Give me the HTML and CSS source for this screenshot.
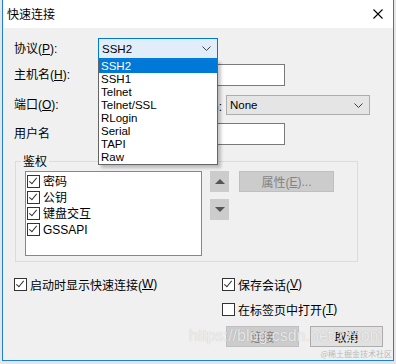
FILE: index.html
```html
<!DOCTYPE html>
<html lang="zh-CN">
<head>
  <meta charset="UTF-8" />
  <title>快速连接</title>
  <link rel="stylesheet" href="styles.css">
</head>
<body>

  <div class="window">
    <div class="titlebar">
      <span class="title">快速连接</span>
      <svg class="close" width="10" height="10" viewBox="0 0 10 10">
        <path d="M0.5 0.5 L9.5 9.5 M9.5 0.5 L0.5 9.5" stroke="#000" stroke-width="1.1" fill="none"/>
      </svg>
    </div>

    <div class="dialog">

      <!-- Connection fields -->
      <div class="form">
        <div class="row row-proto">
          <label class="lbl">协议(<u>P</u>):</label>
          <div class="combo combo-active proto-combo">
            <span>SSH2</span>
            <svg class="chev" width="9" height="5" viewBox="0 0 9 5"><path d="M0.5 0.5 L4.5 4.5 L8.5 0.5" stroke="#404040" fill="none"/></svg>
          </div>
        </div>
        <div class="row row-host">
          <label class="lbl">主机名(<u>H</u>):</label>
          <div class="textbox wide"></div>
        </div>
        <div class="row row-port">
          <label class="lbl">端口(<u>O</u>):</label>
          <div class="textbox port"></div>
          <label class="lbl-fw">防火墙(<u>F</u>):</label>
          <div class="combo fw-combo">
            <span>None</span>
            <svg class="chev" width="9" height="5" viewBox="0 0 9 5"><path d="M0.5 0.5 L4.5 4.5 L8.5 0.5" stroke="#404040" fill="none"/></svg>
          </div>
        </div>
        <div class="row row-user">
          <label class="lbl">用户名</label>
          <div class="textbox wide"></div>
        </div>

        <!-- open protocol list -->
        <ul class="droplist">
          <li class="picked">SSH2</li>
          <li>SSH1</li>
          <li>Telnet</li>
          <li>Telnet/SSL</li>
          <li>RLogin</li>
          <li>Serial</li>
          <li>TAPI</li>
          <li>Raw</li>
        </ul>
      </div>

      <!-- Authentication -->
      <fieldset class="auth">
        <legend>鉴权</legend>
        <div class="auth-inner">
          <div class="listbox">
            <div class="item"><span class="check on"></span>密码</div>
            <div class="item"><span class="check on"></span>公钥</div>
            <div class="item"><span class="check on"></span>键盘交互</div>
            <div class="item"><span class="check on"></span>GSSAPI</div>
          </div>
          <div class="arrows">
            <div class="arrow-btn"><span class="tri-up"></span></div>
            <div class="arrow-btn"><span class="tri-down"></span></div>
          </div>
          <div class="btn disabled props">属性(<u>E</u>)...</div>
        </div>
      </fieldset>

      <!-- Options -->
      <div class="options">
        <div class="opt"><span class="check on"></span>启动时显示快速连接(<u>W</u>)</div>
        <div class="opt-col">
          <div class="opt"><span class="check on"></span>保存会话(<u>V</u>)</div>
          <div class="opt opt-second"><span class="check"></span>在标签页中打开(<u>T</u>)</div>
        </div>
      </div>

      <div class="buttons">
        <div class="btn disabled">连接</div>
        <div class="btn">取消</div>
      </div>

      <div class="watermark">https://blog.csdn.net/zzcom</div>
      <div class="watermark-small">@稀土掘金技术社区</div>
    </div>
  </div>

</body>
</html>
```

FILE: styles.css
```css
body {
  margin: 0;
  width: 396px;
  height: 364px;
  overflow: hidden;
  background: #e6e6e6;
  font-family: "Liberation Sans", "Noto Sans CJK SC", sans-serif;
  font-size: 12px;
  color: #000;
}

u {
  text-decoration: underline;
  text-underline-offset: 1px;
}

.window {
  margin-left: 2px;
  width: 392px;
  height: 361px;
  box-sizing: border-box;
  border: 1px solid #1c80d6;
  border-top: none;
  display: flex;
  flex-direction: column;
}

.titlebar {
  height: 27px;
  flex: none;
  background: #fff;
  display: flex;
  align-items: center;
  justify-content: space-between;
  padding: 0 10px 1px 4px;
}

.title {
  font-family: "Noto Sans CJK SC", sans-serif;
  font-size: 12px;
}

.dialog {
  flex: 1;
  background: #f0f0f0;
  position: relative;
}

/* ---------- connection fields ---------- */

.form {
  position: relative;
  padding: 10px 0 0 11px;
}

.row {
  display: flex;
  align-items: center;
}

.row-host { margin-top: 5px; }
.row-port { margin-top: 9px; }
.row-user { margin-top: 8px; }

.lbl {
  width: 84px;
  flex: none;
  line-height: 14px;
}

.lbl-fw {
  width: 70px;
  padding-right: 4px;
  box-sizing: border-box;
  text-align: right;
}

.textbox {
  height: 22px;
  box-sizing: border-box;
  background: #fff;
  border: 1px solid #7a7a7a;
}

.textbox.wide { width: 187px; }
.textbox.port { width: 58px; height: 20px; }

.combo {
  height: 21px;
  box-sizing: border-box;
  border: 1px solid #adadad;
  background: #e5e5e5;
  display: flex;
  align-items: center;
  justify-content: space-between;
  padding: 0 6px 0 3px;
  font-size: 11.5px;
}

.combo-active {
  background: #e1eefa;
  border-color: #0078d7;
}

.proto-combo { width: 120px; }
.fw-combo { width: 144px; height: 20px; }

.chev { flex: none; }

.droplist {
  position: absolute;
  left: 95px;
  top: 31px;
  width: 120px;
  margin: 0;
  padding: 0;
  list-style: none;
  box-sizing: border-box;
  background: #fff;
  border: 1px solid #646464;
  box-shadow: 3px 3px 3px rgba(0, 0, 0, 0.22);
  font-size: 11.5px;
}

.droplist li {
  height: 13px;
  line-height: 13px;
  padding-left: 2px;
}

.droplist li.picked {
  background: #0078d7;
  color: #fff;
}

/* ---------- authentication ---------- */

.auth {
  margin: 9px 0 0 12px;
  width: 343px;
  box-sizing: border-box;
  padding: 0;
  border: 1px solid #dcdcdc;
}

.auth legend {
  margin-left: 5px;
  padding: 0 2px;
  line-height: 14px;
  font-family: "Noto Sans CJK SC", sans-serif;
}

.auth-inner {
  display: flex;
  align-items: flex-start;
  padding: 3px 0 5px 9px;
}

.listbox {
  width: 177px;
  height: 85px;
  box-sizing: border-box;
  background: #fff;
  border: 1px solid #828790;
  padding: 3px 0 0 1px;
}

.item {
  height: 16px;
  display: flex;
  align-items: flex-start;
  line-height: 14px;
}

.check {
  width: 13px;
  height: 13px;
  box-sizing: border-box;
  border: 1px solid #333;
  background: #fff;
  margin-right: 3px;
  flex: none;
  position: relative;
}

.check.on::after {
  content: "";
  position: absolute;
  left: 3px;
  top: 0px;
  width: 3px;
  height: 7px;
  border: solid #333;
  border-width: 0 1px 1px 0;
  transform: rotate(40deg);
}

.arrows {
  margin-left: 8px;
  display: flex;
  flex-direction: column;
  gap: 7px;
}

.arrow-btn {
  width: 19px;
  height: 21px;
  background: #cccccc;
  display: flex;
  align-items: center;
  justify-content: center;
}

.tri-up {
  border-left: 5px solid transparent;
  border-right: 5px solid transparent;
  border-bottom: 5px solid #555;
}

.tri-down {
  border-left: 5px solid transparent;
  border-right: 5px solid transparent;
  border-top: 5px solid #555;
}

.btn {
  width: 73px;
  height: 21px;
  box-sizing: border-box;
  border: 1px solid #adadad;
  background: #e1e1e1;
  display: flex;
  align-items: center;
  justify-content: center;
}

.btn.disabled {
  background: #cccccc;
  border-color: #bfbfbf;
  color: #838383;
}

.props {
  width: 95px;
  margin-left: 10px;
}

/* ---------- options ---------- */

.options {
  display: grid;
  grid-template-columns: 208px 1fr;
  padding-left: 11px;
  margin-top: 14px;
}

.opt {
  height: 16px;
  display: flex;
  align-items: center;
}

.opt-second { margin-top: 9px; }

.buttons {
  display: flex;
  justify-content: flex-end;
  gap: 11px;
  padding-right: 10px;
  margin-top: 9px;
}

.watermark {
  position: absolute;
  left: 186px;
  top: 299px;
  font-size: 16px;
  color: rgba(255, 255, 255, 0.75);
  text-shadow: 0 0 1px rgba(0, 0, 0, 0.25);
  white-space: nowrap;
}

.watermark-small {
  position: absolute;
  right: 1px;
  bottom: 1px;
  font-size: 8px;
  color: rgba(170, 170, 170, 0.8);
  font-family: "Noto Sans CJK SC", sans-serif;
}
```
